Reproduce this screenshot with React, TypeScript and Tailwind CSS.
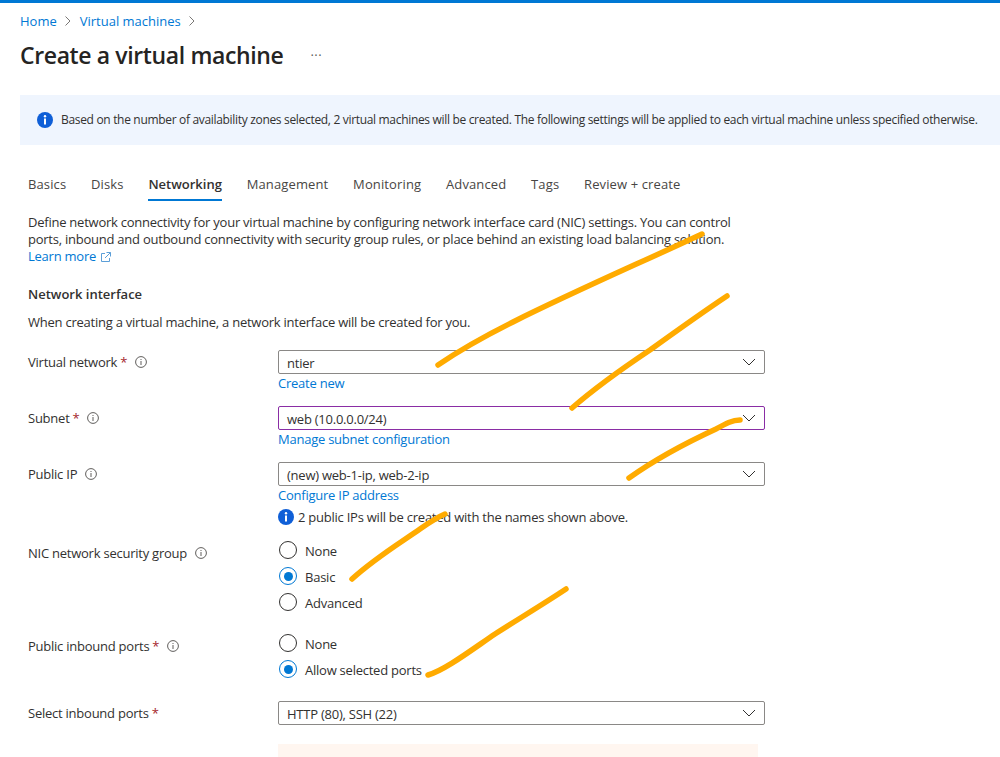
import type { ReactNode } from 'react';

const tabs = ['Basics', 'Disks', 'Networking', 'Management', 'Monitoring', 'Advanced', 'Tags', 'Review + create'];

function InfoBadge() {
  return (
    <svg width="12" height="12" viewBox="0 0 12 12" className="shrink-0">
      <circle cx="6" cy="6" r="5.4" fill="none" stroke="#605e5c" strokeWidth="1" />
      <rect x="5.5" y="5" width="1" height="4" fill="#605e5c" />
      <rect x="5.5" y="3" width="1" height="1" fill="#605e5c" />
    </svg>
  );
}

function InfoSolid() {
  return (
    <svg width="16" height="16" viewBox="0 0 16 16" className="shrink-0">
      <circle cx="8" cy="8" r="8" fill="#0f5fd7" />
      <rect x="7" y="6.5" width="2" height="6" fill="#fff" />
      <circle cx="8" cy="4.3" r="1.2" fill="#fff" />
    </svg>
  );
}

function Chevron() {
  return (
    <svg width="14" height="8" viewBox="0 0 14 8" className="shrink-0">
      <path d="M1 1l6 6 6-6" fill="none" stroke="#323130" strokeWidth="1" />
    </svg>
  );
}

function Crumb() {
  return (
    <svg width="6" height="10" viewBox="0 0 6 10" className="shrink-0">
      <path d="M.5.5L5 5 .5 9.5" fill="none" stroke="#797775" strokeWidth="1" />
    </svg>
  );
}

function Select({ value, focused }: { value: string; focused?: boolean }) {
  return (
    <div className={focused ? 'flex h-6 items-center justify-between rounded-[2px] border border-[#8a2da5] pl-2 pr-2' : 'flex h-6 items-center justify-between rounded-[2px] border border-[#8a8886] pl-2 pr-2'}>
      <span className="pt-px">{value}</span>
      <Chevron />
    </div>
  );
}

function Label({ text, required, info = true }: { text: string; required?: boolean; info?: boolean }) {
  return (
    <div className="flex h-[18px] items-center">
      <span>{text}</span>
      {required && <span className="ml-[3px] text-[#a4262c]">*</span>}
      {info && <span className="ml-2"><InfoBadge /></span>}
    </div>
  );
}

function Row({ label, children, className, labelClass }: { label: ReactNode; children: ReactNode; className?: string; labelClass?: string }) {
  return (
    <div className={'flex ' + (className ?? '')}>
      <div className={'w-[250px] shrink-0 ' + (labelClass ?? 'pt-[3px]')}>{label}</div>
      <div className="w-[487px] shrink-0">{children}</div>
    </div>
  );
}

function Radio({ label, checked }: { label: string; checked?: boolean }) {
  return (
    <div className="flex h-[26px] items-center pl-px">
      {checked ? (
        <span className="flex size-[18px] items-center justify-center rounded-full border border-[#0078d4]">
          <span className="size-[9px] rounded-full bg-[#0078d4]" />
        </span>
      ) : (
        <span className="size-[18px] rounded-full border border-[#323130]" />
      )}
      <span className="ml-2 pt-[2px]">{label}</span>
    </div>
  );
}

function LinkLine({ text }: { text: string }) {
  return <div className="h-[18px] text-[#0078d4]">{text}</div>;
}

export default function App() {
  return (
    <div className="relative h-[757px] w-[1000px] overflow-hidden bg-white font-['Open_Sans','Liberation_Sans',sans-serif] text-[13px] leading-[18px] tracking-[-0.24px] text-[#323130]">
      <div className="h-[3px] bg-[#0078d4]" />

      <div className="mt-[9px] flex h-[18px] items-center pl-5 tracking-normal text-[#0078d4]">
        <span>Home</span>
        <span className="ml-2 mr-[9px]"><Crumb /></span>
        <span>Virtual machines</span>
        <span className="mx-2"><Crumb /></span>
      </div>

      <div className="mt-[9px] flex h-8 items-center pl-5">
        <h1 className="text-[23px] font-semibold leading-8 tracking-[-0.375px] text-[#252423]">Create a virtual machine</h1>
        <span className="ml-[27px] text-[13px] leading-none tracking-[0.5px] text-[#605e5c]">···</span>
      </div>

      <div className="mt-6 ml-5 flex h-[50px] items-center bg-[#eff5fe] pl-[17px]">
        <InfoSolid />
        <span className="ml-2 whitespace-nowrap text-[12px] tracking-[-0.32px]">
          Based on the number of availability zones selected, 2 virtual machines will be created. The following settings will be applied to each virtual machine unless specified otherwise.
        </span>
      </div>

      <div className="mt-[30px] flex gap-[24.8px] pl-7">
        {tabs.map(t => (
          <div key={t} className={t === 'Networking' ? 'h-[26px] border-b-2 border-[#0078d4] font-semibold tracking-normal' : 'h-[26px] tracking-[0.12px] text-[#484644]'}>
            {t}
          </div>
        ))}
      </div>

      <div className="px-7">
        <p className="mt-[13px] w-[720px] whitespace-nowrap leading-[17px]">
          Define network connectivity for your virtual machine by configuring network interface card (NIC) settings. You can control
          <br />
          ports, inbound and outbound connectivity with security group rules, or place behind an existing load balancing solution.
          <br />
          <span className="inline-flex items-center gap-[5px] text-[#0078d4]">
            Learn more
            <svg width="10" height="10" viewBox="0 0 10 10">
              <path d="M4 1.5H.5v8h8V6M5.5.5h4v4M9.5.5L4 6" fill="none" stroke="#5c9fd8" strokeWidth="1" />
            </svg>
          </span>
        </p>

        <h2 className="mt-5 font-semibold tracking-normal">Network interface</h2>
        <p className="mt-2.5">When creating a virtual machine, a network interface will be created for you.</p>

        <Row className="mt-[19px]" label={<Label text="Virtual network" required />}>
          <Select value="ntier" />
          <LinkLine text="Create new" />
        </Row>

        <Row className="mt-3.5" label={<Label text="Subnet" required />}>
          <Select value="web (10.0.0.0/24)" focused />
          <LinkLine text="Manage subnet configuration" />
        </Row>

        <Row className="mt-3.5" label={<Label text="Public IP" />}>
          <Select value="(new) web-1-ip, web-2-ip" />
          <LinkLine text="Configure IP address" />
          <div className="mt-1 flex h-[18px] items-center gap-1">
            <InfoSolid />
            <span>2 public IPs will be created with the names shown above.</span>
          </div>
        </Row>

        <Row className="mt-[11px]" labelClass="pt-[7px]" label={<Label text="NIC network security group" />}>
          <Radio label="None" />
          <Radio label="Basic" checked />
          <Radio label="Advanced" />
        </Row>

        <Row className="mt-[15px]" labelClass="pt-[7px]" label={<Label text="Public inbound ports" required />}>
          <Radio label="None" />
          <Radio label="Allow selected ports" checked />
        </Row>

        <Row className="mt-[19px]" label={<Label text="Select inbound ports" required info={false} />}>
          <Select value="HTTP (80), SSH (22)" />
        </Row>

        <div className="ml-[250px] mt-[19px] h-10 w-[480px] bg-[#fff6f0]" />
      </div>

      {/* hand drawn marks over the form */}
      <svg className="pointer-events-none absolute left-0 top-0" width="1000" height="757" fill="none" stroke="#ffab00" strokeWidth="5.5" strokeLinecap="round" strokeLinejoin="round">
        <path d="M438 365C460 350 485 336 513 322C575 291 640 263 702 234" />
        <path d="M572 408C595 388 620 370 650 350C675 332 700 314 727 296" />
        <path d="M629 478C660 456 690 441 716 429C725 424 732 420 740 420" />
        <path d="M352 579C375 558 400 543 420 529C430 522 438 517 445 514" />
        <path d="M428 675C445 670 470 651 495 634C520 618 545 603 566 589" />
      </svg>
    </div>
  );
}
